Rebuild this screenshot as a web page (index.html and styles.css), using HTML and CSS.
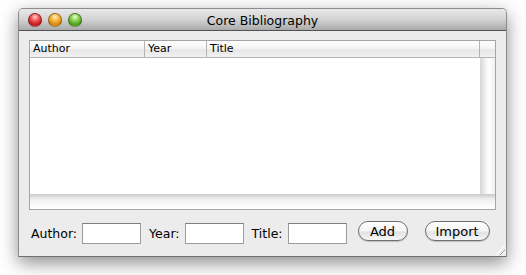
FILE: index.html
```html
<!DOCTYPE html>
<html lang="en">
<head>
  <meta charset="UTF-8" />
  <title>Core Bibliography</title>
  <link rel="stylesheet" href="styles.css">
</head>
<body>
  <div class="window">
    <div class="titlebar">
      <div class="lights">
        <span class="light red"></span>
        <span class="light yellow"></span>
        <span class="light green"></span>
      </div>
      <div class="title">Core Bibliography</div>
      <div></div>
    </div>
    <div class="content">
      <div class="table">
        <div class="thead">
          <div class="th col-author">Author</div>
          <div class="th col-year">Year</div>
          <div class="th col-title">Title</div>
          <div class="th col-corner"></div>
        </div>
        <div class="tbody">
          <div class="rows"></div>
          <div class="vscroll"></div>
        </div>
        <div class="hscroll"></div>
      </div>
      <div class="form">
        <label>Author:</label>
        <input type="text" class="field">
        <label class="next">Year:</label>
        <input type="text" class="field">
        <label class="next">Title:</label>
        <input type="text" class="field">
        <button class="btn add">Add</button>
        <button class="btn import">Import</button>
      </div>
      <div class="grip"></div>
    </div>
  </div>
</body>
</html>
```

FILE: styles.css
```css
* {
  box-sizing: border-box;
  font-family: 'DejaVu Sans', sans-serif;
}
body {
  margin: 0;
  min-height: 100vh;
  background: #fff;
  color: #000;
}
.window {
  margin: 8px 0 0 18px;
  width: 489px;
  height: 249px;
  border: 1px solid #8c8c8c;
  border-bottom-color: #707070;
  border-radius: 5px 5px 0 0;
  box-shadow: 0 6px 18px rgba(0,0,0,0.45);
  display: flex;
  flex-direction: column;
  overflow: hidden;
}
.titlebar {
  height: 22px;
  flex-shrink: 0;
  display: grid;
  grid-template-columns: 1fr auto 1fr;
  align-items: center;
  background: linear-gradient(#e9e9e9, #d2d2d2 50%, #aaaaaa);
  border-bottom: 1px solid #515151;
}
.lights {
  display: flex;
  gap: 6px;
  padding-left: 9px;
}
.light {
  width: 14px;
  height: 14px;
  border-radius: 50%;
  border: 1px solid rgba(0,0,0,0.35);
}
.red {
  background: radial-gradient(circle at 50% 25%, #ffd0d0 0, #f25a5a 35%, #c81818 70%, #f07070 100%);
}
.yellow {
  background: radial-gradient(circle at 50% 25%, #fff0c0 0, #f7b845 35%, #d88a10 70%, #f8c860 100%);
}
.green {
  background: radial-gradient(circle at 50% 25%, #e8ffd0 0, #8fd455 35%, #4e9e1c 70%, #a0e070 100%);
}
.title {
  font-size: 12.5px;
  color: #000;
  padding-top: 1px;
}
.content {
  flex: 1;
  background: #ececec;
  padding: 9px 10px 0 10px;
  position: relative;
}
.table {
  height: 170px;
  border: 1px solid #a5a5a5;
  background: #fff;
  display: flex;
  flex-direction: column;
}
.thead {
  display: flex;
  height: 17px;
  background: linear-gradient(#ffffff, #f3f3f3 50%, #e6e6e6 55%, #f2f2f2);
  border-bottom: 1px solid #b4b4b4;
}
.th {
  font-size: 11px;
  line-height: 16px;
  padding-left: 3px;
  border-right: 1px solid #b4b4b4;
}
.col-author { width: 115px; }
.col-year { width: 62px; }
.col-title { flex: 1; }
.col-corner { width: 15px; border-right: none; }
.tbody {
  flex: 1;
  display: flex;
}
.rows {
  flex: 1;
}
.vscroll {
  width: 15px;
  background: linear-gradient(90deg, #d6d6d6, #f4f4f4 40%, #fff 60%, #f0f0f0);
}
.hscroll {
  height: 15px;
  background: linear-gradient(#c9c9c9, #ececec 30%, #f7f7f7 60%, #fff);
}
.form {
  display: flex;
  align-items: center;
  padding: 11px 0 0 2px;
}
.form label {
  font-size: 12.5px;
  margin-right: 5px;
}
.form .next {
  margin-left: 8px;
}
.field {
  width: 59px;
  height: 21px;
  border: 1px solid #9c9c9c;
  border-top-color: #7e7e7e;
  background: #fff;
  padding: 0;
}
.btn {
  height: 20px;
  margin-bottom: 5px;
  border: 1px solid #6f6f6f;
  border-radius: 10px;
  background: linear-gradient(#ffffff, #f4f4f4 50%, #e2e2e2 55%, #f6f6f6);
  box-shadow: 0 1px 1px rgba(0,0,0,0.2);
  font-size: 13px;
  padding: 0;
  color: #000;
}
.add {
  width: 50px;
  margin-left: 11px;
}
.import {
  width: 65px;
  margin-left: 17px;
}
.grip {
  position: absolute;
  right: 1px;
  bottom: 1px;
  width: 10px;
  height: 10px;
  background: repeating-linear-gradient(135deg, transparent 0 2px, #9a9a9a 2px 3px, #fff 3px 4px);
  clip-path: polygon(100% 0, 100% 100%, 0 100%);
}
```
